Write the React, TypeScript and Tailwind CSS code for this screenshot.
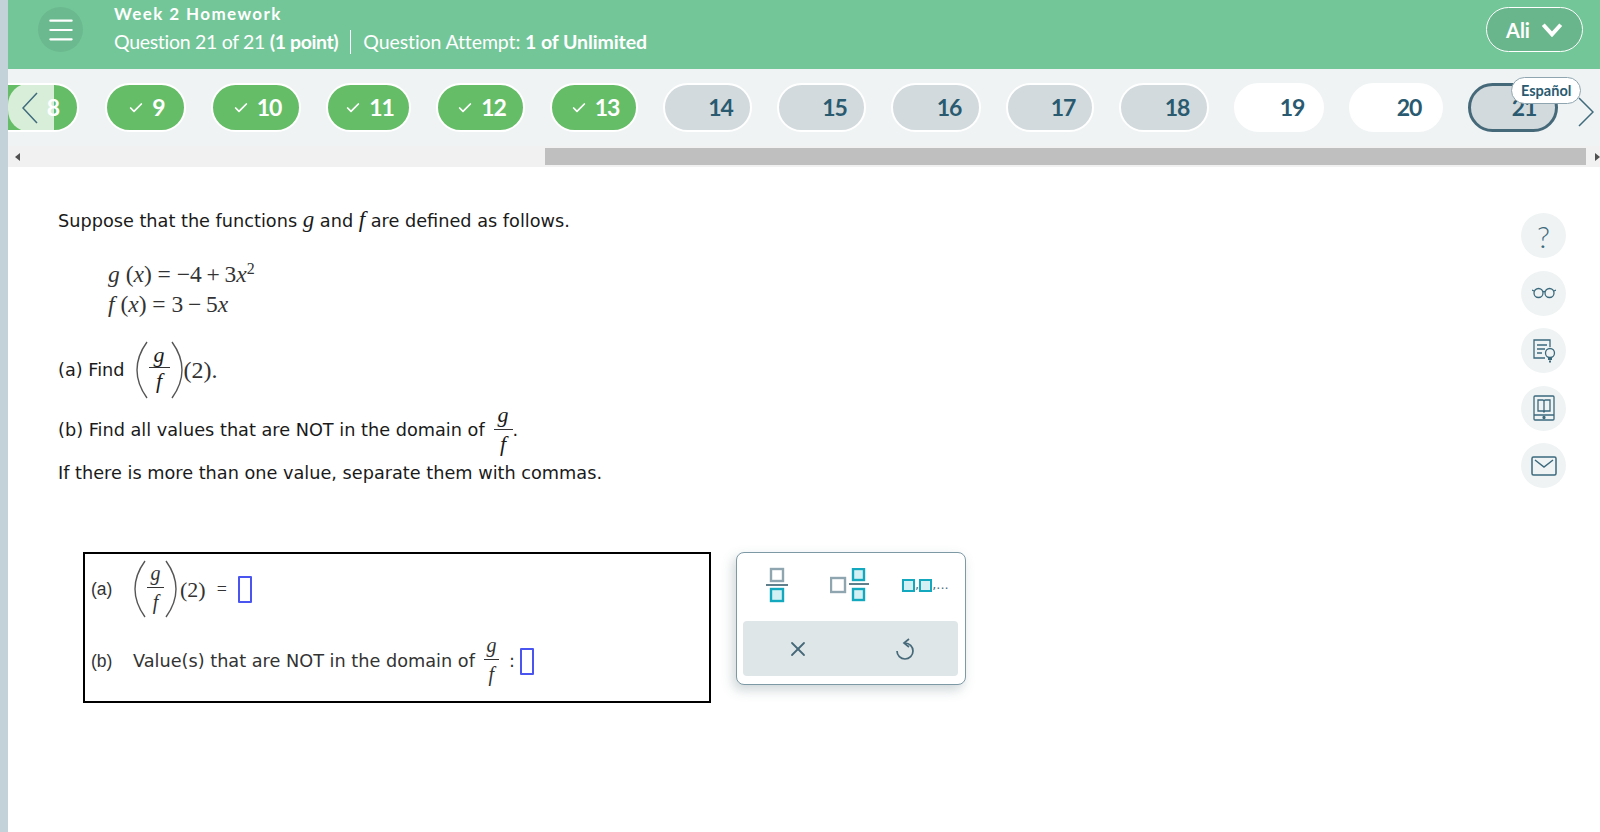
import { Check, Menu, X } from "lucide-react";

const pills = [
  { n: 9, w: "w-[81px]", kind: "done" },
  { n: 10, w: "w-[90px]", kind: "done" },
  { n: 11, w: "w-[85px]", kind: "done" },
  { n: 12, w: "w-[89px]", kind: "done" },
  { n: 13, w: "w-[88px]", kind: "done" },
  { n: 14, w: "w-[89px]", kind: "seen" },
  { n: 15, w: "w-[89px]", kind: "seen" },
  { n: 16, w: "w-[90px]", kind: "seen" },
  { n: 17, w: "w-[88px]", kind: "seen" },
  { n: 18, w: "w-[90px]", kind: "seen" },
  { n: 19, w: "w-[90px]", kind: "open" },
  { n: 20, w: "w-[94px]", kind: "open" },
];

function Pill({ n, w, kind }: { n: number; w: string; kind: string }) {
  const tone =
    kind === "done"
      ? "border-white bg-[#66bd68] text-white"
      : kind === "seen"
        ? "border-white bg-[#d2dadd] text-[#2a5a70]"
        : "border-white bg-white text-[#2a5a70]";
  return (
    <div className={`flex h-[49px] shrink-0 items-center justify-center gap-[8px] rounded-[26px] border-2 pl-[2px] text-[23px] font-bold ${w} ${tone}`}>
      <Check className={kind === "done" ? "h-[16px] w-[16px]" : "invisible h-[16px] w-[16px]"} strokeWidth={2.6} />
      <span className="tracking-[-1px]">{n}</span>
    </div>
  );
}

function Fraction({
  size = "text-[22px]",
  bar = "w-[19px]",
  lead = "leading-[28px]",
  shift = "",
}: {
  size?: string;
  bar?: string;
  lead?: string;
  shift?: string;
}) {
  return (
    <span className={`inline-flex flex-col items-center font-['Liberation_Serif',serif] italic ${lead} ${size} ${shift}`}>
      <span>g</span>
      <span className={`h-px bg-[#333] ${bar}`} />
      <span>f</span>
    </span>
  );
}

function BigParen({ flip }: { flip?: boolean }) {
  return (
    <svg viewBox="0 0 14 58" className={flip ? "h-[58px] w-[14px] -scale-x-100" : "h-[58px] w-[14px]"} fill="none" stroke="#555" strokeWidth="1.4">
      <path d="M12 1C4 12 2 20 2 29s2 17 10 28" />
    </svg>
  );
}

function AnswerBlank() {
  return <span className="inline-block h-[27px] w-[14px] rounded-[1px] border-2 border-[#4a55f0]" />;
}

function IconCircle({ children }: { children: React.ReactNode }) {
  return (
    <div className="grid h-[45px] w-[45px] place-items-center rounded-full bg-[#eff3f4] text-[#3c6a7d]">
      {children}
    </div>
  );
}

export default function App() {
  return (
    <div className="flex h-[832px] overflow-hidden bg-white font-['Lato',sans-serif]">
      <div className="w-[8px] shrink-0 bg-[#c3d1d8]" />
      <div className="flex min-w-0 flex-1 flex-col">
        <header className="flex h-[69px] shrink-0 items-center bg-[#73c698] pl-[30px] pr-[17px] text-white">
          <div className="grid h-[45px] w-[45px] -translate-y-[5px] place-items-center rounded-full bg-[#6bb98f]">
            <Menu className="h-[32px] w-[32px]" strokeWidth={1.6} />
          </div>
          <div className="ml-[31px] -translate-y-[6px]">
            <div className="text-[17px] font-bold leading-[22px] tracking-[1.4px]">Week 2 Homework</div>
            <div className="mt-[4px] flex items-center text-[19.5px] leading-[26px] tracking-[-0.3px]">
              <span>Question 21 of 21 <b className="tracking-[-0.4px]">(1 point)</b></span>
              <span className="mx-[12px] h-[24px] w-px bg-white" />
              <span className="tracking-[-0.1px]">Question Attempt: <b>1 of Unlimited</b></span>
            </div>
          </div>
          <div className="ml-auto flex h-[45px] w-[97px] -translate-y-[5px] items-center justify-center gap-[11px] rounded-[24px] border border-white bg-[#69b68c] text-[20px] font-bold">
            Ali
            <svg viewBox="0 0 24 16" className="h-[14px] w-[22px]" fill="none" stroke="white" strokeWidth="4.5">
              <path d="M2 2l10 11L22 2" />
            </svg>
          </div>
        </header>

        <nav className="relative flex h-[77px] shrink-0 items-start gap-[25px] overflow-hidden bg-[#eff3f4] pl-[97px] pt-[14px]">
          <div className="absolute left-[-30px] top-[14px] flex h-[49px] w-[101px] items-center justify-end rounded-[26px] border-2 border-white bg-[#66bd68] pr-[17px] text-[23px] font-bold text-white">
            8
          </div>
          <div className="absolute left-0 top-[14px] flex h-[49px] w-[46px] items-center rounded-l-[22px] bg-white/75 pl-[14px]">
            <svg viewBox="0 0 16 32" className="h-[32px] w-[16px]" fill="none" stroke="#3f6b7d" strokeWidth="1.5">
              <path d="M15 1L1 16l14 15" />
            </svg>
          </div>
          {pills.map((p) => (
            <Pill key={p.n} {...p} />
          ))}
          <div className="flex h-[49px] w-[90px] shrink-0 items-center justify-center rounded-[26px] border-[3px] border-[#46697a] bg-[#d2dadd] text-[23px] font-bold text-[#2a5a70]">
            <Check className="invisible h-[16px] w-[16px]" />
            <span className="ml-[6px] tracking-[-1px]">21</span>
          </div>
          <div className="absolute left-[1503px] top-[8px] rounded-[14px] border border-[#8fa6b0] bg-white px-[9px] py-[3px] text-[14.5px] font-bold leading-[19px] text-[#2a5a70]">
            Español
          </div>
          <svg viewBox="0 0 16 30" className="absolute left-[1570px] top-[28px] h-[30px] w-[16px]" fill="none" stroke="#3f6b7d" strokeWidth="1.5">
            <path d="M1 1l14 14L1 29" />
          </svg>
        </nav>

        <div className="flex h-[21px] shrink-0 items-center bg-[#f1f1f1]">
          <span className="ml-[7px] h-0 w-0 border-y-[4px] border-r-[5px] border-y-transparent border-r-[#505050]" />
          <span className="ml-[525px] h-[17px] w-[1043px] bg-[#bfbfbf]" />
          <span className="ml-[9px] h-0 w-0 border-y-[4px] border-l-[5px] border-y-transparent border-l-[#505050]" />
        </div>

        <main className="flex flex-1 justify-between pl-[50px] pr-[34px] pt-[41px]">
          <div className="font-['DejaVu_Sans',sans-serif] text-[17.7px] text-[#1a1a1a]">
            <p className="leading-[24px]">
              Suppose that the functions <i className="font-['Liberation_Serif',serif] text-[23px]">g</i> and <i className="font-['Liberation_Serif',serif] text-[23px]">f</i> are defined as follows.
            </p>
            <div className="ml-[50px] mt-[26px] font-['Liberation_Serif',serif] text-[23.5px] leading-[30px] text-[#333]">
              <div>
                <i>g</i> (<i>x</i>) = −4{"\u2009"}+{"\u2009"}3<i>x</i>
                <sup className="text-[16px]">2</sup>
              </div>
              <div>
                <i>f</i> (<i>x</i>) = 3{"\u2009"}−{"\u2009"}5<i>x</i>
              </div>
            </div>
            <div className="mt-[22px] flex items-center gap-[10px]">
              <span>(a) Find</span>
              <span className="flex items-center">
                <BigParen />
                <Fraction lead="leading-[25px]" bar="w-[21px]" shift="-translate-y-[3px]" />
                <BigParen flip />
                <span className="font-['Liberation_Serif',serif] text-[24px] text-[#333]">(2).</span>
              </span>
            </div>
            <div className="mt-[3px] flex items-center gap-[9px]">
              <span>(b) Find all values that are NOT in the domain of</span>
              <span className="flex items-center">
                <Fraction shift="-translate-y-[1px]" />
                <span>.</span>
              </span>
            </div>
            <p className="mt-[2px] leading-[24px]">If there is more than one value, separate them with commas.</p>

            <div className="mt-[67px] flex items-start gap-[25px]">
              <div className="ml-[25px] flex h-[151px] w-[628px] flex-col border-2 border-black pl-[6px] text-[#333]">
                <div className="flex h-[70px] items-center">
                  <span className="w-[42px] font-['Liberation_Sans',sans-serif] text-[17.5px]">(a)</span>
                  <BigParen />
                  <Fraction size="text-[20px]" bar="w-[17px]" shift="-translate-y-[2px]" />
                  <BigParen flip />
                  <span className="ml-[2px] font-['Liberation_Serif',serif] text-[22px]">(2)</span>
                  <span className="mx-[11px] font-['Liberation_Serif',serif] text-[18px]">=</span>
                  <AnswerBlank />
                </div>
                <div className="mt-[1px] flex h-[72px] items-center">
                  <span className="w-[42px] font-['Liberation_Sans',sans-serif] text-[17.5px]">(b)</span>
                  <span>Value(s) that are NOT in the domain of</span>
                  <span className="ml-[9px]">
                    <Fraction size="text-[20px]" bar="w-[15px]" shift="-translate-y-[2px]" />
                  </span>
                  <span className="ml-[10px] mr-[5px]">:</span>
                  <AnswerBlank />
                </div>
              </div>
              <div className="w-[230px] rounded-[8px] border border-[#7d99a5] bg-white pb-[8px] pl-[6px] pr-[7px] pt-[6px] shadow-[-3px_5px_12px_rgba(60,90,100,0.25)]">
                <div className="flex h-[62px] items-center pb-[10px] pl-[22px]">
                  <svg viewBox="0 0 24 36" className="h-[36px] w-[24px]">
                    <rect x="6" y="2" width="12" height="12" fill="white" stroke="#8fa6b0" strokeWidth="2.4" />
                    <path d="M1 18h22" stroke="#5f7f8d" strokeWidth="2" />
                    <rect x="6" y="22" width="12" height="12" fill="#d3f0f4" stroke="#14a8bf" strokeWidth="2.4" />
                  </svg>
                  <svg viewBox="0 0 40 34" className="ml-[41px] h-[34px] w-[40px]">
                    <rect x="1" y="10" width="14" height="14" fill="white" stroke="#8fa6b0" strokeWidth="2.4" />
                    <rect x="23" y="1" width="11" height="11" fill="#d3f0f4" stroke="#14a8bf" strokeWidth="2.4" />
                    <path d="M19 16h20" stroke="#5f7f8d" strokeWidth="2" />
                    <rect x="23" y="21" width="11" height="11" fill="#d3f0f4" stroke="#14a8bf" strokeWidth="2.4" />
                  </svg>
                  <span className="ml-[32px] flex items-end text-[13px] leading-[14px] text-[#4f6f7d]">
                    <span className="h-[13px] w-[13px] border-2 border-[#14a8bf] bg-[#d3f0f4]" />,
                    <span className="h-[13px] w-[13px] border-2 border-[#14a8bf] bg-[#d3f0f4]" />,...
                  </span>
                </div>
                <div className="flex h-[55px] items-center justify-around rounded-[4px] bg-[#dfe6e8] text-[#46697a]">
                  <X className="h-[24px] w-[24px]" strokeWidth={1.8} />
                  <svg viewBox="0 0 20 24" className="h-[24px] w-[20px]" fill="none" stroke="currentColor" strokeWidth="1.7">
                    <path d="M10 6a8 8 0 1 1-8 8" />
                    <path d="M14 2L9 6l5 4" />
                  </svg>
                </div>
              </div>
            </div>
          </div>

          <div className="flex flex-col gap-[12.5px] pt-[5px]">
            <IconCircle>
              <span className="font-['Lato',sans-serif] text-[30px] font-light leading-none text-[#3c6a7d]">?</span>
            </IconCircle>
            <IconCircle>
              <svg viewBox="0 0 24 12" className="h-[12px] w-[24px]" fill="none" stroke="currentColor" strokeWidth="1.3">
                <circle cx="6.5" cy="6" r="4.5" />
                <circle cx="17.5" cy="6" r="4.5" />
                <path d="M11 5q1-1 2 0M2 4L0 3M22 4l2-1" />
              </svg>
            </IconCircle>
            <IconCircle>
              <svg viewBox="0 0 24 24" className="h-[24px] w-[24px]" fill="none" stroke="currentColor" strokeWidth="1.3">
                <path d="M13 19H2V1h16v7" />
                <path d="M5 6h10M5 10h8M5 14h5" />
                <circle cx="18" cy="14" r="4.5" />
                <path d="M16 20h4M17 22.5h2" strokeWidth="2" />
              </svg>
            </IconCircle>
            <IconCircle>
              <svg viewBox="0 0 22 26" className="h-[26px] w-[22px]" fill="none" stroke="currentColor" strokeWidth="1.3">
                <rect x="1" y="1" width="20" height="24" rx="1" />
                <path d="M1 20h20M5 5h5l1 1 1-1h5v11h-5l-1 1-1-1H5zM11 6v11" />
                <circle cx="11" cy="22.5" r="1" fill="currentColor" />
              </svg>
            </IconCircle>
            <IconCircle>
              <svg viewBox="0 0 26 20" className="h-[20px] w-[26px]" fill="none" stroke="currentColor" strokeWidth="1.5">
                <rect x="1" y="1" width="24" height="18" rx="1.5" />
                <path d="M4 4l9 7 9-7" />
              </svg>
            </IconCircle>
          </div>
        </main>
      </div>
    </div>
  );
}
